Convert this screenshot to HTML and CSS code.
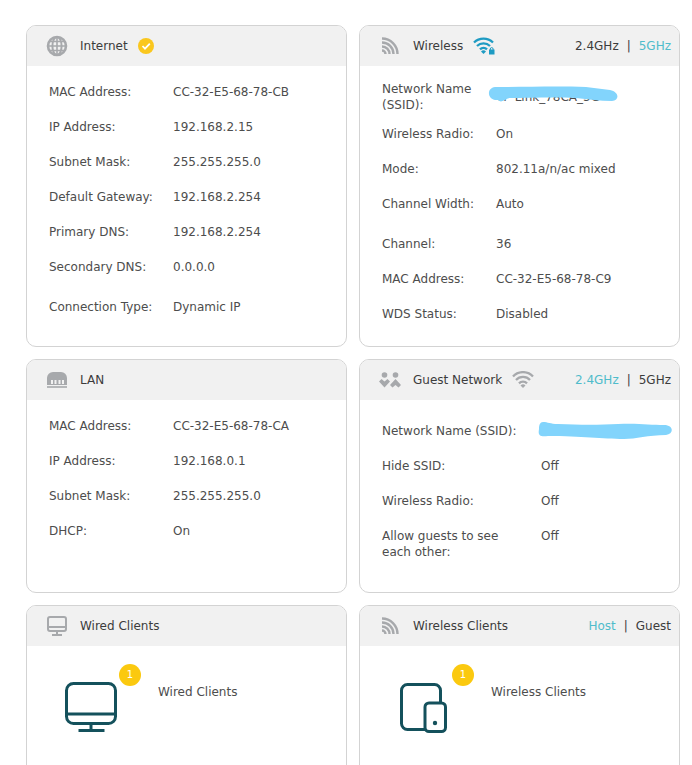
FILE: index.html
```html
<!DOCTYPE html>
<html lang="en">
  <head>
    <meta charset="UTF-8" />
    <meta name="viewport" content="width=device-width, initial-scale=1.0" />
    <title>Status</title>
    <link rel="stylesheet" href="styles.css">
  </head>

  <body>
    <main class="grid">
      <section class="card">
        <header class="card-head">
          <svg class="head-icon" viewBox="0 0 22 22">
            <g fill="none" stroke="#a7a9ac" stroke-width="2">
              <circle cx="11" cy="11" r="9" stroke-width="2.6" />
              <ellipse cx="11" cy="11" rx="4.6" ry="9" />
              <path d="M11 2v18M2 11h18M3.500 6.500h15M3.500 15.500h15" stroke-width="1.600" />
            </g>
          </svg>
          <h2>Internet</h2>
          <svg class="check" viewBox="0 0 16 16">
            <circle cx="8" cy="8" r="8" fill="#fac71e" />
            <path d="M4.5 8l2.5 2.6 4.8-4.9" fill="none" stroke="#fff" stroke-width="1.8" />
          </svg>
        </header>
        <dl class="list">
          <div class="row"><dt>MAC Address:</dt><dd>CC-32-E5-68-78-CB</dd></div>
          <div class="row"><dt>IP Address:</dt><dd>192.168.2.15</dd></div>
          <div class="row"><dt>Subnet Mask:</dt><dd>255.255.255.0</dd></div>
          <div class="row"><dt>Default Gateway:</dt><dd>192.168.2.254</dd></div>
          <div class="row"><dt>Primary DNS:</dt><dd>192.168.2.254</dd></div>
          <div class="row"><dt>Secondary DNS:</dt><dd>0.0.0.0</dd></div>
          <div class="row spaced"><dt>Connection Type:</dt><dd>Dynamic IP</dd></div>
        </dl>
      </section>

      <section class="card">
        <header class="card-head">
          <svg class="head-icon" viewBox="0 0 22 22">
            <g fill="none" stroke="#a7a9ac" stroke-width="2.4">
              <path d="M3 3.5a15.5 15.5 0 0 1 15.5 15.5M3 7.5a11.5 11.5 0 0 1 11.5 11.5M3 11.5a7.5 7.5 0 0 1 7.5 7.5" />
              <path d="M3 15.5a3.5 3.5 0 0 1 3.5 3.5" />
            </g>
          </svg>
          <h2>Wireless</h2>
          <svg class="wifi" viewBox="0 0 22 18">
            <g fill="none" stroke="#1e9bc3" stroke-width="2.3">
              <path d="M1 5.5a13.6 13.6 0 0 1 19 0M4 9a9.3 9.3 0 0 1 13 0M7 12.4a5 5 0 0 1 7 0" />
            </g>
            <path d="M8 14.400a3.6 3.6 0 0 1 5 0l-2.5 2.600z" fill="#1e9bc3" />
            <rect x="15" y="10.5" width="7" height="8" fill="#f1f1f1" />
            <rect x="16" y="12.5" width="5.500" height="5" fill="#1e9bc3" />
            <path d="M17.300 13v-1a1.4 1.4 0 0 1 2.800 0v1" fill="none" stroke="#1e9bc3" />
          </svg>
          <nav class="tabs">
            <a href="#">2.4GHz</a><span>|</span><a href="#" class="active">5GHz</a>
          </nav>
        </header>
        <dl class="list wireless">
          <div class="row tall">
            <dt>Network Name (SSID):</dt>
            <dd>TP-Link_78CA_5G
              <svg class="marker" viewBox="0 0 130 18">
                <path d="M7 1C35 1 70 0 98 1L122 4C131 6 132 14 124 15C112 15 100 13 88 12C65 11 40 12 22 12C18 12 14 18 10 14C-1 15-2 2 7 1z" />
              </svg>
            </dd>
          </div>
          <div class="row"><dt>Wireless Radio:</dt><dd>On</dd></div>
          <div class="row"><dt>Mode:</dt><dd>802.11a/n/ac mixed</dd></div>
          <div class="row"><dt>Channel Width:</dt><dd>Auto</dd></div>
          <div class="row spaced"><dt>Channel:</dt><dd>36</dd></div>
          <div class="row"><dt>MAC Address:</dt><dd>CC-32-E5-68-78-C9</dd></div>
          <div class="row"><dt>WDS Status:</dt><dd>Disabled</dd></div>
        </dl>
      </section>

      <section class="card">
        <header class="card-head">
          <svg class="head-icon" viewBox="0 0 22 22">
            <path d="M1 16V9a6 6 0 0 1 6-6h8a6 6 0 0 1 6 6v7h-3v-5h-2v5h-1.500v-5h-2v5h-2v-5h-2v5H7v-5H5v5z" fill="#a7a9ac" />
            <path d="M1 18h20" stroke="#b5b7b9" stroke-width="2" />
            <path d="M1 15.5h20" stroke="#a7a9ac" />
          </svg>
          <h2>LAN</h2>
        </header>
        <dl class="list">
          <div class="row"><dt>MAC Address:</dt><dd>CC-32-E5-68-78-CA</dd></div>
          <div class="row"><dt>IP Address:</dt><dd>192.168.0.1</dd></div>
          <div class="row"><dt>Subnet Mask:</dt><dd>255.255.255.0</dd></div>
          <div class="row"><dt>DHCP:</dt><dd>On</dd></div>
        </dl>
      </section>

      <section class="card">
        <header class="card-head">
          <svg class="head-icon" viewBox="0 0 22 22">
            <g fill="#a7a9ac">
              <circle cx="5.5" cy="6" r="2.8" />
              <circle cx="16.5" cy="6" r="2.8" />
              <path d="M0 12.500L2.500 10l3 2.500 3-2.500L11 12.500 5.500 18.500z" />
              <path d="M16.500 10l5.500 6-2.5 2.500-3-2.500-3 2.500L11 16z" />
            </g>
          </svg>
          <h2>Guest Network</h2>
          <svg class="wifi" viewBox="0 0 22 18">
            <g fill="none" stroke="#a7a9ac" stroke-width="2.3">
              <path d="M1 5.5a13.6 13.6 0 0 1 20 0M4 9a9.6 9.6 0 0 1 14 0M7 12.4a5.5 5.5 0 0 1 8 0" />
            </g>
            <path d="M8.5 14.4a3.6 3.6 0 0 1 5 0L11 17z" fill="#a7a9ac" />
          </svg>
          <nav class="tabs">
            <a href="#" class="active">2.4GHz</a><span>|</span><a href="#">5GHz</a>
          </nav>
        </header>
        <dl class="list guest">
          <div class="row spaced">
            <dt>Network Name (SSID):</dt>
            <dd>
              <svg class="marker" viewBox="0 0 134 18">
                <path d="M5 1C10 1 12 3 20 3C42 4 62 4 80 3C100 2 113 4 126 4C136 4 136 13 128 14C110 14 98 18 86 18C64 18 44 15 10 15C1 16 0 14 1 8C1 4 2 1 5 1z" />
              </svg>
            </dd>
          </div>
          <div class="row"><dt>Hide SSID:</dt><dd>Off</dd></div>
          <div class="row"><dt>Wireless Radio:</dt><dd>Off</dd></div>
          <div class="row"><dt>Allow guests to see each other:</dt><dd>Off</dd></div>
        </dl>
      </section>

      <section class="card">
        <header class="card-head">
          <svg class="head-icon" viewBox="0 0 22 22">
            <g fill="none" stroke="#a7a9ac" stroke-width="2">
              <rect x="2" y="2" width="18" height="14" rx="2" />
              <path d="M2 12h18M11 16v4M6 20h10" />
            </g>
          </svg>
          <h2>Wired Clients</h2>
        </header>
        <div class="clients">
          <div class="device">
            <svg viewBox="0 0 52 52">
              <g fill="none" stroke="#14515c" stroke-width="3">
                <rect x="1.5" y="2.5" width="49" height="40" rx="7" />
                <path d="M1.5 33h49M26 43v7M13.5 49.5h26" />
              </g>
            </svg>
            <span class="badge">1</span>
          </div>
          <p>Wired Clients</p>
        </div>
      </section>

      <section class="card">
        <header class="card-head">
          <svg class="head-icon" viewBox="0 0 22 22">
            <g fill="none" stroke="#a7a9ac" stroke-width="2.4">
              <path d="M3 3.5a15.5 15.5 0 0 1 15.5 15.5M3 7.5a11.5 11.5 0 0 1 11.5 11.5M3 11.5a7.5 7.5 0 0 1 7.5 7.5" />
              <path d="M3 15.5a3.5 3.5 0 0 1 3.5 3.5" />
            </g>
          </svg>
          <h2>Wireless Clients</h2>
          <nav class="tabs">
            <a href="#" class="active">Host</a><span>|</span><a href="#">Guest</a>
          </nav>
        </header>
        <div class="clients">
          <div class="device">
            <svg viewBox="0 0 52 52">
              <g fill="none" stroke="#14515c" stroke-width="3">
                <rect x="3.5" y="3.5" width="39" height="45" rx="6" />
                <rect x="27" y="22" width="20.5" height="28.5" rx="4" fill="#fff" />
              </g>
              <circle cx="37" cy="42" r="2.2" fill="#14515c" />
            </svg>
            <span class="badge">1</span>
          </div>
          <p>Wireless Clients</p>
        </div>
      </section>
    </main>
  </body>
</html>
```

FILE: styles.css
```css
* {
  box-sizing: border-box;
  margin: 0;
  padding: 0;
}

body {
  padding: 25px 12px 12px 26px;
  background-color: #fff;
  color: #4d4d4d;
  font-family: Verdana, "DejaVu Sans", sans-serif;
  font-size: 12px;
  line-height: 16px;
}

.grid {
  display: grid;
  grid-template-columns: 1fr 1fr;
  gap: 12px;
}

.card {
  border: 1px solid #d3d3d3;
  border-radius: 10px;
  overflow: hidden;
}

.card-head {
  display: flex;
  align-items: center;
  height: 40px;
  padding: 0 8px 0 19px;
  background-color: #f1f1f1;
  color: #3c3c3c;
}

.card-head h2 {
  margin: 0 10px 0 12px;
  font-size: 12px;
  font-weight: normal;
}

.head-icon {
  width: 22px;
  height: 22px;
}

.check {
  width: 16px;
  height: 16px;
}

.wifi {
  width: 22px;
  height: 18px;
}

.tabs {
  display: flex;
  gap: 8px;
  margin-left: auto;
}

.tabs a {
  color: #3c3c3c;
  text-decoration: none;
}

.tabs .active {
  color: #4fbccb;
}

.list {
  padding: 9px 8px 14px 22px;
}

.row {
  display: flex;
  padding: 9px 0 10px;
}

.row.spaced {
  padding-top: 14px;
}

.row.tall {
  align-items: center;
  padding: 6px 0 4px;
}

dt {
  flex: none;
  width: 124px;
  padding-right: 8px;
}

.wireless dt {
  width: 114px;
}

.guest dt {
  width: 159px;
  padding-right: 20px;
}

.guest {
  padding-bottom: 22px;
}

dd {
  position: relative;
}

/* blue stroke drawn over the network name */
.marker {
  position: absolute;
  top: -3px;
  left: -8px;
  width: 130px;
  height: 18px;
  fill: #82d4fc;
}

.guest .marker {
  top: -2px;
  left: -3px;
  width: 134px;
}

.clients {
  display: flex;
  gap: 41px;
  min-height: 180px;
  padding: 35px 8px 15px 38px;
}

.clients p {
  padding-top: 3px;
}

.device {
  position: relative;
  width: 52px;
  height: 52px;
}

.device svg {
  width: 52px;
  height: 52px;
}

.badge {
  position: absolute;
  top: -17px;
  right: -24px;
  width: 22px;
  height: 22px;
  border-radius: 50%;
  background-color: #fbc90f;
  color: #fff;
  font-size: 10px;
  line-height: 22px;
  text-align: center;
}
```
